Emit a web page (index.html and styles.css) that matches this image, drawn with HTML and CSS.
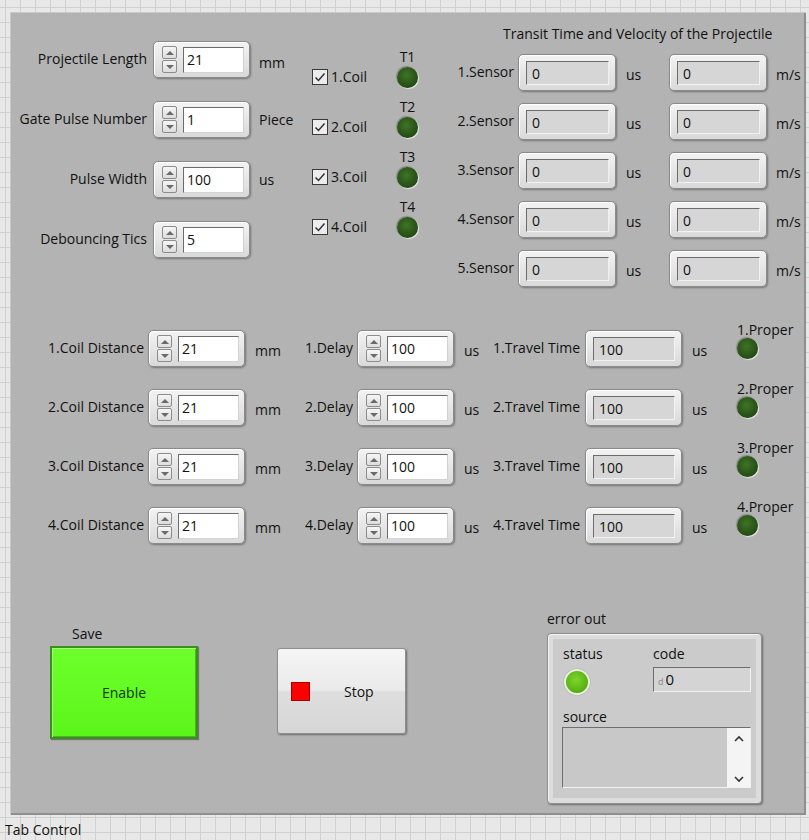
FILE: index.html
```html
<!DOCTYPE html>
<html lang="en">
<head>
    <meta charset="UTF-8">
    <title>Coil Gun Front Panel</title>
    <link rel="stylesheet" href="styles.css">
</head>
<body>
    <div class="panel">

        <!-- 윗부분: 설정값 / 코일 / 센서 -->
        <section class="top">
            <div class="params">
                <label class="lbl">Projectile Length</label>
                <div class="ctl"><span class="spin"><i class="up"></i><i class="dn"></i></span><span class="field">21</span></div>
                <span class="unit low">mm</span>

                <label class="lbl">Gate Pulse Number</label>
                <div class="ctl"><span class="spin"><i class="up"></i><i class="dn"></i></span><span class="field">1</span></div>
                <span class="unit">Piece</span>

                <label class="lbl">Pulse Width</label>
                <div class="ctl"><span class="spin"><i class="up"></i><i class="dn"></i></span><span class="field">100</span></div>
                <span class="unit">us</span>

                <label class="lbl">Debouncing Tics</label>
                <div class="ctl"><span class="spin"><i class="up"></i><i class="dn"></i></span><span class="field">5</span></div>
                <span class="unit"></span>
            </div>

            <div class="coils">
                <div class="coil">
                    <span class="chk-wrap"><span class="chk"><svg width="14" height="14" viewBox="0 0 14 14"><path d="M2.5 7.5 L5.5 10.5 L11.5 3.5" fill="none" stroke="#333" stroke-width="1.5"/></svg></span>1.Coil</span>
                    <span class="led-box"><span>T1</span><i class="led"></i></span>
                </div>
                <div class="coil">
                    <span class="chk-wrap"><span class="chk"><svg width="14" height="14" viewBox="0 0 14 14"><path d="M2.5 7.5 L5.5 10.5 L11.5 3.5" fill="none" stroke="#333" stroke-width="1.5"/></svg></span>2.Coil</span>
                    <span class="led-box"><span>T2</span><i class="led"></i></span>
                </div>
                <div class="coil">
                    <span class="chk-wrap"><span class="chk"><svg width="14" height="14" viewBox="0 0 14 14"><path d="M2.5 7.5 L5.5 10.5 L11.5 3.5" fill="none" stroke="#333" stroke-width="1.5"/></svg></span>3.Coil</span>
                    <span class="led-box"><span>T3</span><i class="led"></i></span>
                </div>
                <div class="coil">
                    <span class="chk-wrap"><span class="chk"><svg width="14" height="14" viewBox="0 0 14 14"><path d="M2.5 7.5 L5.5 10.5 L11.5 3.5" fill="none" stroke="#333" stroke-width="1.5"/></svg></span>4.Coil</span>
                    <span class="led-box"><span>T4</span><i class="led"></i></span>
                </div>
            </div>

            <div class="sensors">
                <div class="sensors-title">Transit Time and Velocity of the Projectile</div>
                <div class="sensor-grid">
                    <label class="lbl">1.Sensor</label>
                    <div class="ind"><span class="ro">0</span></div>
                    <span class="unit">us</span>
                    <div class="ind"><span class="ro">0</span></div>
                    <span class="unit">m/s</span>

                    <label class="lbl">2.Sensor</label>
                    <div class="ind"><span class="ro">0</span></div>
                    <span class="unit">us</span>
                    <div class="ind"><span class="ro">0</span></div>
                    <span class="unit">m/s</span>

                    <label class="lbl">3.Sensor</label>
                    <div class="ind"><span class="ro">0</span></div>
                    <span class="unit">us</span>
                    <div class="ind"><span class="ro">0</span></div>
                    <span class="unit">m/s</span>

                    <label class="lbl">4.Sensor</label>
                    <div class="ind"><span class="ro">0</span></div>
                    <span class="unit">us</span>
                    <div class="ind"><span class="ro">0</span></div>
                    <span class="unit">m/s</span>

                    <label class="lbl">5.Sensor</label>
                    <div class="ind"><span class="ro">0</span></div>
                    <span class="unit">us</span>
                    <div class="ind"><span class="ro">0</span></div>
                    <span class="unit">m/s</span>
                </div>
            </div>
        </section>

        <!-- 가운데: 코일 거리 / 지연 / 이동시간 -->
        <section class="coil-grid">
            <label class="lbl">1.Coil Distance</label>
            <div class="ctl"><span class="spin"><i class="up"></i><i class="dn"></i></span><span class="field">21</span></div>
            <span class="unit">mm</span>
            <label class="lbl">1.Delay</label>
            <div class="ctl"><span class="spin"><i class="up"></i><i class="dn"></i></span><span class="field">100</span></div>
            <span class="unit">us</span>
            <label class="lbl">1.Travel Time</label>
            <div class="ind"><span class="ro">100</span></div>
            <span class="unit">us</span>
            <span class="proper"><span>1.Proper</span><i class="led"></i></span>

            <label class="lbl">2.Coil Distance</label>
            <div class="ctl"><span class="spin"><i class="up"></i><i class="dn"></i></span><span class="field">21</span></div>
            <span class="unit">mm</span>
            <label class="lbl">2.Delay</label>
            <div class="ctl"><span class="spin"><i class="up"></i><i class="dn"></i></span><span class="field">100</span></div>
            <span class="unit">us</span>
            <label class="lbl">2.Travel Time</label>
            <div class="ind"><span class="ro">100</span></div>
            <span class="unit">us</span>
            <span class="proper"><span>2.Proper</span><i class="led"></i></span>

            <label class="lbl">3.Coil Distance</label>
            <div class="ctl"><span class="spin"><i class="up"></i><i class="dn"></i></span><span class="field">21</span></div>
            <span class="unit">mm</span>
            <label class="lbl">3.Delay</label>
            <div class="ctl"><span class="spin"><i class="up"></i><i class="dn"></i></span><span class="field">100</span></div>
            <span class="unit">us</span>
            <label class="lbl">3.Travel Time</label>
            <div class="ind"><span class="ro">100</span></div>
            <span class="unit">us</span>
            <span class="proper"><span>3.Proper</span><i class="led"></i></span>

            <label class="lbl">4.Coil Distance</label>
            <div class="ctl"><span class="spin"><i class="up"></i><i class="dn"></i></span><span class="field">21</span></div>
            <span class="unit">mm</span>
            <label class="lbl">4.Delay</label>
            <div class="ctl"><span class="spin"><i class="up"></i><i class="dn"></i></span><span class="field">100</span></div>
            <span class="unit">us</span>
            <label class="lbl">4.Travel Time</label>
            <div class="ind"><span class="ro">100</span></div>
            <span class="unit">us</span>
            <span class="proper"><span>4.Proper</span><i class="led"></i></span>
        </section>

        <!-- 아래: 버튼 / 에러 -->
        <section class="bottom">
            <div class="save">
                <div class="save-lbl">Save</div>
                <button class="btn-enable">Enable</button>
            </div>

            <button class="btn-stop"><i class="red"></i><span>Stop</span></button>

            <div class="error">
                <div class="error-lbl">error out</div>
                <div class="cluster">
                    <div class="cluster-in">
                        <div class="status">
                            <span>status</span>
                            <i class="led-on"></i>
                        </div>
                        <div class="code">
                            <span>code</span>
                            <div class="code-field"><small>d</small>0</div>
                        </div>
                        <div class="source">
                            <span>source</span>
                            <div class="source-field">
                                <div class="scroll">
                                    <svg width="12" height="8" viewBox="0 0 12 8"><path d="M2 6 L6 2 L10 6" fill="none" stroke="#333" stroke-width="1.6"/></svg>
                                    <svg width="12" height="8" viewBox="0 0 12 8"><path d="M2 2 L6 6 L10 2" fill="none" stroke="#333" stroke-width="1.6"/></svg>
                                </div>
                            </div>
                        </div>
                    </div>
                </div>
            </div>
        </section>
    </div>

    <div class="tab-lbl">Tab Control</div>
</body>
</html>
```

FILE: styles.css
```css
body {
    margin          : 0;
    width           : 809px;
    height          : 840px;
    overflow        : hidden;
    font-family     : "Open Sans", "Noto Sans", sans-serif;
    font-size       : 14px;
    line-height     : 17px;
    color           : #111111;
    background-color: #e8e8e8;
    background-image: linear-gradient(90deg, #d0d0d0 1px, transparent 1px),
                      linear-gradient(#d0d0d0 1px, transparent 1px);
    background-size : 15px 15px;
    background-position: 5px 7px;
}

.panel {
    margin          : 12px 0 0 10px;
    width           : 796px;
    height          : 803px;
    background-color: #b3b3b3;
    box-shadow      : inset 1px 1px 0 #c9c9c9, inset -2px -2px 0 #8f8f8f;
}

.lbl {
    text-align   : right;
    white-space  : nowrap;
    margin-bottom: 2px;
}

.unit {
    white-space: nowrap;
}

/* ---------- 공통 컨트롤 ---------- */
.ctl {
    box-sizing   : border-box;
    width        : 97px;
    height       : 37px;
    display      : flex;
    align-items  : center;
    padding-left : 8px;
    border       : 1px solid #8a8a8a;
    border-radius: 5px;
    background   : linear-gradient(#f3f3f3, #d9d9d9);
    box-shadow   : 1px 1px 2px rgba(0, 0, 0, 0.35), inset 1px 1px 0 #ffffff;
}

.spin {
    display       : flex;
    flex-direction: column;
    gap           : 1px;
}

.spin i {
    box-sizing     : border-box;
    width          : 15px;
    height         : 13px;
    border         : 1px solid #8c8c8c;
    border-radius  : 2px;
    background     : linear-gradient(#f6f6f6, #dcdcdc);
    display        : flex;
    align-items    : center;
    justify-content: center;
}

.spin i::after {
    content     : "";
    border-left : 4px solid transparent;
    border-right: 4px solid transparent;
}

.spin .up::after { border-bottom: 4px solid #6a6a6a; }
.spin .dn::after { border-top   : 4px solid #6a6a6a; }

.field {
    box-sizing  : border-box;
    margin-left : 6px;
    width       : 61px;
    height      : 26px;
    padding-left: 3px;
    line-height : 24px;
    background  : #ffffff;
    border      : 1px solid;
    border-color: #6c6c6c #d2d2d2 #d2d2d2 #6c6c6c;
}

.ind {
    box-sizing   : border-box;
    width        : 98px;
    height       : 37px;
    display      : flex;
    padding      : 6px 6px 5px 7px;
    border       : 1px solid #8a8a8a;
    border-radius: 5px;
    background   : linear-gradient(#f3f3f3, #d9d9d9);
    box-shadow   : 1px 1px 2px rgba(0, 0, 0, 0.35), inset 1px 1px 0 #ffffff;
}

.ro {
    flex        : 1;
    padding-left: 5px;
    line-height : 24px;
    background  : #d6d6d6;
    border      : 1px solid;
    border-color: #6c6c6c #f2f2f2 #f2f2f2 #6c6c6c;
}

.led {
    display      : block;
    width        : 21px;
    height       : 21px;
    border-radius: 50%;
    background   : radial-gradient(circle at 45% 40%, #3f7426 0%, #2a5418 55%, #183a0c 100%);
    box-shadow   : 1px 1px 1px rgba(255, 255, 255, 0.7), -1px -1px 1px rgba(0, 0, 0, 0.25);
}

/* ---------- 윗부분 ---------- */
.top {
    display: flex;
    height : 318px;
}

.params {
    width                : 293px;
    margin-top           : 29px;
    display              : grid;
    grid-template-columns: 137px 103px auto;
    grid-auto-rows       : 37px;
    row-gap              : 23px;
    align-items          : center;
    align-content        : start;
}

.params .ctl {
    justify-self: end;
}

.params .unit {
    padding-left: 9px;
}

.params .low {
    padding-top: 6px;
}

.coils {
    width         : 120px;
    margin-left   : 9px;
    margin-top    : 36px;
    display       : flex;
    flex-direction: column;
    gap           : 10px;
}

.coil {
    display    : flex;
    align-items: flex-end;
}

.chk-wrap {
    width        : 85px;
    display      : flex;
    align-items  : center;
    gap          : 3px;
    margin-bottom: 3px;
}

.chk {
    box-sizing     : border-box;
    width          : 16px;
    height         : 16px;
    border         : 1px solid #3a3a3a;
    background     : #ececec;
    display        : flex;
    align-items    : center;
    justify-content: center;
}

.led-box {
    display       : flex;
    flex-direction: column;
    align-items   : center;
    gap           : 2px;
}

.sensors {
    margin-left: 22px;
    margin-top : 13px;
}

.sensors-title {
    padding-left : 49px;
    margin-bottom: 12px;
    white-space  : nowrap;
}

.sensor-grid {
    display              : grid;
    grid-template-columns: 60px 102px 53px 98px auto;
    grid-auto-rows       : 37px;
    row-gap              : 12px;
    align-items          : center;
}

.sensor-grid .ind {
    justify-self: end;
}

.sensor-grid .unit {
    padding-top : 3px;
    padding-left: 10px;
}

.sensor-grid .unit:nth-child(5n) {
    padding-left: 9px;
}

/* ---------- 가운데 ---------- */
.coil-grid {
    display              : grid;
    grid-template-columns: 134px 101px 55px 53px 101px 36px 90px 102px 55px auto;
    grid-auto-rows       : 37px;
    row-gap              : 22px;
    align-items          : center;
}

.coil-grid .ctl,
.coil-grid .ind {
    justify-self: end;
    width       : 97px;
}

.coil-grid .unit {
    padding-top : 3px;
    padding-left: 10px;
}

.proper {
    align-self    : start;
    margin-top    : -9px;
    display       : flex;
    flex-direction: column;
    align-items   : flex-start;
}

/* ---------- 아래 ---------- */
.bottom {
    display     : flex;
    align-items : flex-start;
    margin-top  : 66px;
    padding-left: 40px;
}

.save {
    margin-top: 15px;
}

.save-lbl {
    padding-left : 22px;
    margin-bottom: 4px;
}

button {
    font-family: inherit;
    font-size  : 14px;
    color      : #111111;
    padding    : 0;
    cursor     : pointer;
}

.btn-enable {
    box-sizing: border-box;
    width     : 148px;
    height    : 93px;
    border    : 2px solid #3b8f1c;
    background: linear-gradient(#6dff2c, #5cf51a);
    box-shadow: inset 1px 1px 0 #a6ff7e, inset -1px -1px 0 #46b81e, 1px 1px 1px rgba(0, 0, 0, 0.35);
    color     : #143804;
}

.btn-stop {
    box-sizing   : border-box;
    width        : 129px;
    height       : 86px;
    margin-left  : 79px;
    margin-top   : 38px;
    display      : flex;
    align-items  : center;
    padding-left : 13px;
    border       : 1px solid #8e8e8e;
    border-radius: 3px;
    background   : linear-gradient(#f5f5f5 0%, #eaeaea 49%, #dedede 51%, #d6d6d6 100%);
    box-shadow   : 1px 1px 2px rgba(0, 0, 0, 0.4);
}

.btn-stop .red {
    box-sizing: border-box;
    width     : 19px;
    height    : 19px;
    background: #ff0000;
    border    : 1px solid #a40000;
}

.btn-stop span {
    margin-left: 34px;
}

.error {
    margin-left: 141px;
}

.error-lbl {
    margin-bottom: 6px;
}

.cluster {
    box-sizing   : border-box;
    width        : 215px;
    height       : 171px;
    padding      : 5px;
    border       : 1px solid #8e8e8e;
    border-radius: 4px;
    background   : #dcdcdc;
    box-shadow   : 1px 1px 2px rgba(0, 0, 0, 0.4), inset 1px 1px 0 #f4f4f4;
}

.cluster-in {
    box-sizing           : border-box;
    height               : 100%;
    background           : #cbcbcb;
    padding              : 6px 0 0 9px;
    display              : grid;
    grid-template-columns: 91px 98px;
    align-content        : start;
}

.status,
.code {
    display       : flex;
    flex-direction: column;
    align-items   : flex-start;
}

.status span {
    padding-left: 1px;
}

.led-on {
    display      : block;
    margin-top   : 7px;
    margin-left  : 2px;
    width        : 26px;
    height       : 26px;
    box-sizing   : border-box;
    border-radius: 50%;
    border       : 2px solid #e8f0e0;
    background   : radial-gradient(circle at 45% 40%, #7ed62a 0%, #5cb515 60%, #3f8a0a 100%);
    box-shadow   : 0 0 1px rgba(0, 0, 0, 0.5);
}

.code-field {
    box-sizing  : border-box;
    margin-top  : 5px;
    width       : 98px;
    height      : 25px;
    padding-left: 4px;
    line-height : 23px;
    background  : #d4d4d4;
    border      : 1px solid;
    border-color: #6e6e6e #f2f2f2 #f2f2f2 #6e6e6e;
    font-size   : 15px;
}

.code-field small {
    font-size   : 9px;
    color       : #8a8a8a;
    margin-right: 2px;
}

.source {
    grid-column   : 1 / 3;
    margin-top    : 13px;
    display       : flex;
    flex-direction: column;
}

.source span {
    padding-left: 1px;
}

.source-field {
    box-sizing     : border-box;
    margin-top     : 2px;
    width          : 189px;
    height         : 61px;
    background     : #c8c8c8;
    border         : 1px solid;
    border-color   : #6e6e6e #f2f2f2 #f2f2f2 #6e6e6e;
    display        : flex;
    justify-content: flex-end;
}

.scroll {
    width          : 23px;
    background     : #f4f4f4;
    display        : flex;
    flex-direction : column;
    justify-content: space-between;
    align-items    : center;
    padding        : 7px 0 4px;
}

.tab-lbl {
    margin-top  : 6px;
    padding-left: 5px;
}
```
